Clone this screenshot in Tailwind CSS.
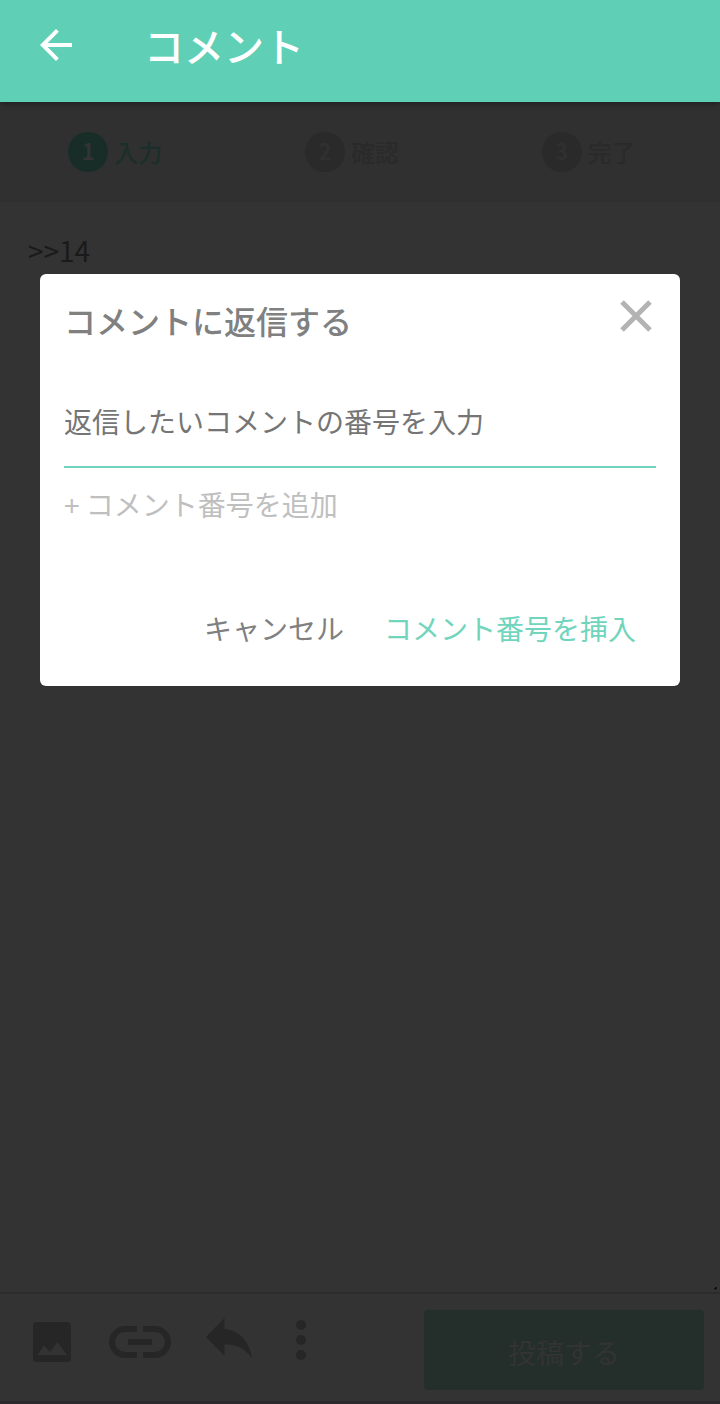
<!DOCTYPE html>
<html lang="ja">
  <head>
    <meta charset="UTF-8" />
    <meta name="viewport" content="width=device-width, initial-scale=1.0" />
    <title>コメント</title>
    <script src="https://cdn.jsdelivr.net/npm/@tailwindcss/browser@4"></script>
  </head>
  <body
    class="flex flex-col min-h-screen bg-[#333333] font-['Noto_Sans_CJK_JP','Noto_Sans',sans-serif]"
  >
    <!-- Header -->
    <header
      class="relative flex items-center gap-16 h-[102px] pb-3 px-8 bg-[#5fd0b5] text-white shadow-[0_2px_6px_rgba(0,0,0,0.35)]"
    >
      <button type="button" aria-label="戻る">
        <svg class="w-12 h-12" viewBox="0 0 24 24" fill="currentColor">
          <path
            d="M20 11H7.83l5.59-5.59L12 4l-8 8 8 8 1.41-1.41L7.83 13H20v-2z"
          />
        </svg>
      </button>
      <h1 class="text-[40px] leading-[60px] font-medium">コメント</h1>
    </header>

    <!-- Steps -->
    <ol
      class="grid grid-cols-3 h-[100px] pr-2.5 bg-[#303030] text-2xl font-medium text-[#2a2a2a]"
    >
      <li class="flex items-center justify-center gap-1.5 pr-1.5 text-[#1a2f29]">
        <span
          class="flex justify-center w-10 h-10 rounded-full bg-[#182d27] text-[22px] leading-9 font-bold text-[#333333]"
          >1</span
        >
        入力
      </li>
      <li class="flex items-center justify-center gap-1.5 pr-1.5">
        <span
          class="flex justify-center w-10 h-10 rounded-full bg-[#2a2a2a] text-[22px] leading-9 font-bold text-[#303030]"
          >2</span
        >
        確認
      </li>
      <li class="flex items-center justify-center gap-1.5 pr-1.5">
        <span
          class="flex justify-center w-10 h-10 rounded-full bg-[#2a2a2a] text-[22px] leading-9 font-bold text-[#303030]"
          >3</span
        >
        完了
      </li>
    </ol>

    <!-- Comment text -->
    <main class="relative flex flex-col flex-1">
      <textarea
        aria-label="コメント"
        class="flex-1 w-full px-7 py-7 resize-none outline-none text-[28px] leading-10 text-[#1a1a1a]"
      >
&gt;&gt;14</textarea
      >
      <!-- resize grip -->
      <svg
        class="absolute right-0.5 bottom-0.5 w-1 h-1"
        viewBox="0 0 4 4"
        fill="#111111"
      >
        <path d="M1 1h2v2H2v1H1V3H0V2h1z" />
      </svg>
    </main>

    <!-- Toolbar -->
    <footer
      class="flex items-start justify-between h-28 pt-4 pl-7 pr-4 border-t-2 border-b-3 border-t-[#2c2c2c] border-b-[#2c2a2c] text-[#262626]"
    >
      <div class="flex items-center gap-8 pt-2">
        <button type="button" aria-label="画像">
          <svg class="w-12 h-12" viewBox="0 0 48 48" fill="currentColor">
            <path
              fill-rule="evenodd"
              d="M9 4h30a4 4 0 0 1 4 4v32a4 4 0 0 1-4 4H9a4 4 0 0 1-4-4V8a4 4 0 0 1 4-4zM9.500 37h29.500L29.500 24l-7.500 10-6-6.500z"
            />
          </svg>
        </button>
        <button type="button" aria-label="リンク">
          <svg class="w-16 h-12" viewBox="0 0 64 48" fill="currentColor">
            <path
              d="M29 8H17a16 16 0 0 0 0 32h12v-6H17a10 10 0 0 1 0-20h12zM35 8h12a16 16 0 0 1 0 32H35v-6h12a10 10 0 0 0 0-20H35zM20 21h24v6H20z"
            />
          </svg>
        </button>
        <button type="button" aria-label="返信">
          <svg class="w-12 h-12" viewBox="0 0 48 48" fill="currentColor">
            <path d="M2 19 20.500 0v11C36 12 46 25 48 40 41 31 33 26 20.500 26.500V38z" />
          </svg>
        </button>
        <button type="button" aria-label="その他">
          <svg class="w-10 h-12" viewBox="0 0 40 48" fill="currentColor">
            <circle cx="17" cy="7" r="5" />
            <circle cx="17" cy="22" r="5" />
            <circle cx="17" cy="37" r="5" />
          </svg>
        </button>
      </div>
      <button
        type="button"
        class="w-[280px] h-20 pt-1 rounded bg-[#242f2c] text-[28px] text-[#333333]"
      >
        投稿する
      </button>
    </footer>

    <!-- Reply dialog -->
    <div
      role="dialog"
      aria-labelledby="dialog-title"
      class="absolute inset-x-10 top-[274px] px-6 pt-4 pb-[38px] rounded-md bg-white text-[28px] text-[#808080]"
    >
      <div class="flex items-start justify-between">
        <h2 id="dialog-title" class="pt-1.5 text-[32px] leading-12 font-medium">
          コメントに返信する
        </h2>
        <button type="button" aria-label="閉じる" class="p-1 text-[#b3b3b3]">
          <svg
            class="w-8 h-[52px]"
            viewBox="0 0 32 52"
            fill="none"
            stroke="currentColor"
            stroke-width="5"
          >
            <path d="m2 8 28 28M30 8 2 36" />
          </svg>
        </button>
      </div>
      <input
        type="text"
        aria-label="コメント番号"
        placeholder="返信したいコメントの番号を入力"
        class="block w-full h-[90px] mt-7 pb-0.5 border-b-2 border-[#70d5bc] outline-none placeholder:text-[#757575]"
      />
      <button type="button" class="block mt-4 leading-10 text-[#bfbfbf]">
        + コメント番号を追加
      </button>
      <div class="flex justify-end gap-10 mt-21 pr-5 leading-10">
        <button type="button">キャンセル</button>
        <button type="button" class="text-[#70d5bc]">
          コメント番号を挿入
        </button>
      </div>
    </div>
  </body>
</html>
